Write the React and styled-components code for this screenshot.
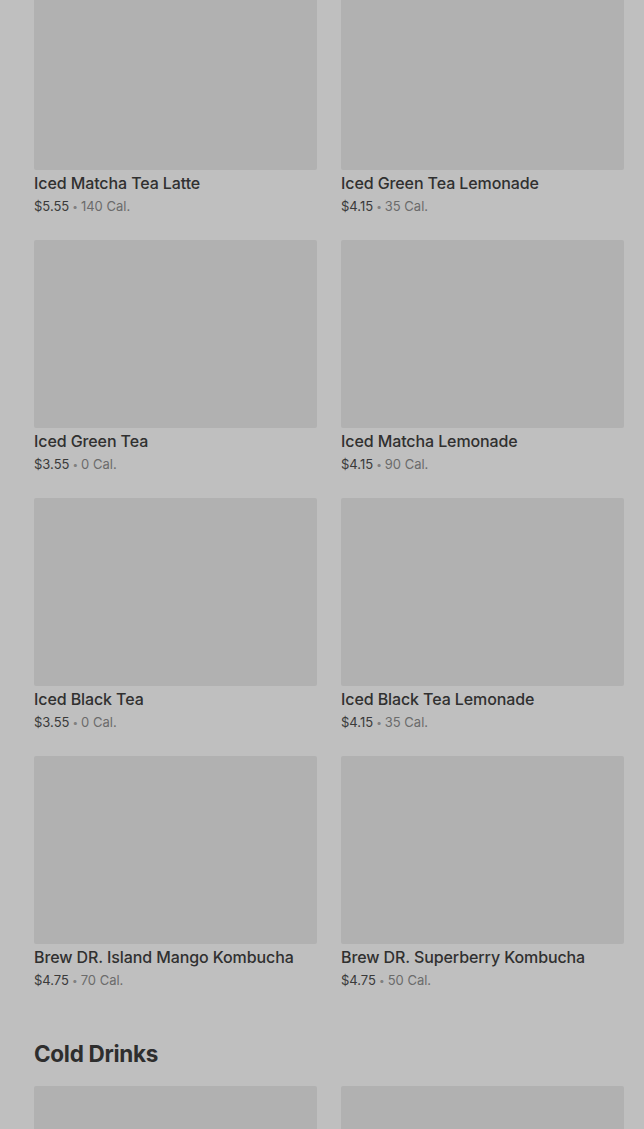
import React from "react";
import styled, { createGlobalStyle } from "styled-components";

const Global = createGlobalStyle`
  html, body { margin: 0; padding: 0; background: #bfbfbf; overflow: hidden; }
  body { font-family: Inter, "Noto Sans", sans-serif; }
`;

const Page = styled.div`
  padding: 0 20px 0 34px;
  margin-top: -18px;
  display: flex;
  flex-direction: column;
`;

const Grid = styled.div`
  display: grid;
  grid-template-columns: 283px 283px;
  column-gap: 24px;
  row-gap: 24px;
`;

const Card = styled.div`
  display: flex;
  flex-direction: column;
`;

const Thumb = styled.div`
  height: 188px;
  background: #b1b1b1;
  border-radius: 2px;
`;

const Title = styled.div`
  margin-top: 1px;
  margin-bottom: 1px;
  font-size: 16px;
  line-height: 24px;
  font-weight: 500;
  letter-spacing: -0.1px;
  color: #303030;
`;

const Meta = styled.div`
  font-size: 13px;
  line-height: 20px;
  color: #6b6b6b;
  display: flex;
  gap: 3px;
  align-items: center;
`;

const Price = styled.span`
  color: #3a3a3a;
`;

const Dot = styled.span`
  color: #808080;
  font-size: 10px;
`;

const Heading = styled.h2`
  margin: 48px 0 16px;
  font-size: 22.5px;
  line-height: 32px;
  font-weight: 700;
  color: #2e2e2e;
  letter-spacing: -0.3px;
`;

const items = [
  ["Iced Matcha Tea Latte", "$5.55", "140 Cal."],
  ["Iced Green Tea Lemonade", "$4.15", "35 Cal."],
  ["Iced Green Tea", "$3.55", "0 Cal."],
  ["Iced Matcha Lemonade", "$4.15", "90 Cal."],
  ["Iced Black Tea", "$3.55", "0 Cal."],
  ["Iced Black Tea Lemonade", "$4.15", "35 Cal."],
  ["Brew DR. Island Mango Kombucha", "$4.75", "70 Cal."],
  ["Brew DR. Superberry Kombucha", "$4.75", "50 Cal."],
];

function Item({ name, price, cal }) {
  return (
    <Card>
      <Thumb />
      <Title>{name}</Title>
      <Meta>
        <Price>{price}</Price>
        <Dot>•</Dot>
        <span>{cal}</span>
      </Meta>
    </Card>
  );
}

export default function App() {
  return (
    <>
      <Global />
      <Page>
        <Grid>
          {items.map(([n, p, c]) => (
            <Item key={n} name={n} price={p} cal={c} />
          ))}
        </Grid>
        <Heading>Cold Drinks</Heading>
        <Grid>
          <Card><Thumb /></Card>
          <Card><Thumb /></Card>
        </Grid>
      </Page>
    </>
  );
}
